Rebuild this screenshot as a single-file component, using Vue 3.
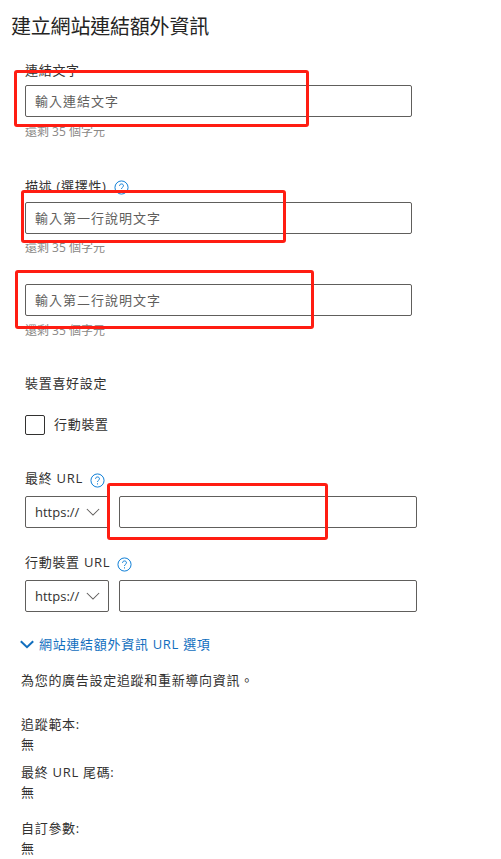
<template>
	<div class="panel">
		<h1 class="panel-title">建立網站連結額外資訊</h1>

		<div class="field first">
			<label class="field-label">連結文字</label>
			<input class="text-input" type="text" placeholder="輸入連結文字" />
			<div class="hint">還剩 35 個字元</div>
		</div>

		<div class="field second">
			<label class="field-label">
				描述 (選擇性)
				<svg class="help" viewBox="0 0 16 16"><circle cx="8" cy="8" r="7" /><path d="M5.9 6.2C6 4.9 6.9 4.2 8 4.2c1.2 0 2.1.8 2.1 1.9 0 1.7-2.1 1.7-2.1 3.4" /><path d="M8 11v1.2" /></svg>
			</label>
			<input class="text-input" type="text" placeholder="輸入第一行說明文字" />
			<div class="hint tight">還剩 35 個字元</div>
		</div>

		<div class="field third">
			<input class="text-input" type="text" placeholder="輸入第二行說明文字" />
			<div class="hint">還剩 35 個字元</div>
		</div>

		<div class="device-title">裝置喜好設定</div>
		<label class="check-row">
			<span class="check-box"></span>
			<span class="check-text">行動裝置</span>
		</label>

		<div v-for="row in urlRows" :key="row.label" class="url-field" :class="row.cls">
			<label class="field-label">
				{{ row.label }}
				<svg class="help" viewBox="0 0 16 16"><circle cx="8" cy="8" r="7" /><path d="M5.9 6.2C6 4.9 6.9 4.2 8 4.2c1.2 0 2.1.8 2.1 1.9 0 1.7-2.1 1.7-2.1 3.4" /><path d="M8 11v1.2" /></svg>
			</label>
			<div class="url-row">
				<div class="protocol">
					<span>https://</span>
					<svg viewBox="0 0 16 10" class="protocol-arrow"><path d="M1 1l7 7 7-7" /></svg>
				</div>
				<input class="text-input url-input" type="text" />
			</div>
		</div>

		<a class="options-link">
			<svg viewBox="0 0 14 9" class="options-arrow"><path d="M.8 1.2L7 7.2l6.2-6" /></svg>
			<span>網站連結額外資訊 URL 選項</span>
		</a>

		<p class="options-desc">為您的廣告設定追蹤和重新導向資訊。</p>

		<dl class="summary">
			<div v-for="item in summary" :key="item.label" class="summary-item">
				<dt>{{ item.label }}</dt>
				<dd>{{ item.value }}</dd>
			</div>
		</dl>

		<!-- red boxes someone drew over the screenshot -->
		<div
			v-for="(box, index) in marks"
			:key="index"
			class="mark"
			:style="{ left: box[0] + 'px', top: box[1] + 'px', width: box[2] + 'px', height: box[3] + 'px' }"
		></div>
	</div>
</template>

<script setup>
const urlRows = [
	{ label: '最終 URL', cls: 'final' },
	{ label: '行動裝置 URL', cls: 'mobile' },
]

const summary = [
	{ label: '追蹤範本:', value: '無' },
	{ label: '最終 URL 尾碼:', value: '無' },
	{ label: '自訂參數:', value: '無' },
]

const marks = [
	[14, 70, 295, 57],
	[21, 190, 265, 53],
	[15, 270, 299, 59],
	[107, 483, 221, 57],
]
</script>

<style scoped>
.panel {
	position: relative;
	width: 501px;
	height: 859px;
	overflow: hidden;
	background: #fff;
	color: #323130;
	font-family: "Open Sans", "Noto Sans CJK TC", sans-serif;
	font-size: 13px;
	line-height: 20px;
	letter-spacing: 0.7px;
}

.panel-title {
	margin: 0;
	padding: 13px 0 0 11px;
	height: 28px;
	line-height: 28px;
	font-size: 20px;
	font-weight: 400;
	letter-spacing: -0.2px;
	color: #252423;
}

.field,
.url-field {
	margin-left: 25px;
}

.field.first {
	margin-top: 19px;
}

.field.second {
	margin-top: 34px;
}

.field.third {
	margin-top: 26px;
}

.field-label {
	display: flex;
	align-items: center;
	gap: 7px;
	height: 20px;
}

.field-label + .text-input {
	margin-top: 5px;
}

.field.second .text-input {
	margin-top: 6px;
}

.text-input {
	display: block;
	box-sizing: border-box;
	width: 387px;
	height: 32px;
	padding: 0 9px;
	border: 1px solid #605e5c;
	border-radius: 2px;
	outline: none;
	background: #fff;
	color: #323130;
	font-family: inherit;
	font-size: 13px;
	letter-spacing: 1px;
}

.text-input::placeholder {
	color: #605e5c;
	opacity: 1;
}

.hint {
	height: 20px;
	margin-top: 5px;
	font-size: 12px;
	color: #8a8886;
	letter-spacing: 0;
}

.hint.tight {
	margin-top: 4px;
}

.device-title {
	height: 20px;
	margin: 32px 0 0 25px;
}

.check-row {
	display: flex;
	align-items: center;
	gap: 9px;
	height: 20px;
	margin: 22px 0 0 25px;
}

.check-box {
	box-sizing: border-box;
	width: 20px;
	height: 20px;
	border: 1px solid #323130;
	border-radius: 2px;
}

.check-text {
	margin-bottom: 2px;
}

.url-field.final {
	margin-top: 33px;
}

.url-field.mobile {
	margin-top: 24px;
}

.url-row {
	display: flex;
	gap: 10px;
	margin-top: 8px;
}

.protocol {
	display: flex;
	align-items: center;
	justify-content: space-between;
	box-sizing: border-box;
	width: 84px;
	height: 32px;
	padding: 0 8px 0 9px;
	border: 1px solid #605e5c;
	border-radius: 2px;
	font-size: 13px;
	letter-spacing: 0;
}

.protocol-arrow {
	width: 14px;
	height: 9px;
	fill: none;
	stroke: #605e5c;
	stroke-width: 1.2;
}

.url-input {
	width: 298px;
	margin: 0;
}

.help {
	width: 15px;
	height: 15px;
	margin-top: 3px;
	fill: none;
	stroke: #0078d4;
	stroke-width: 1;
}

.url-field .help {
	margin-top: 5px;
}

.options-link {
	display: flex;
	align-items: center;
	gap: 5px;
	height: 20px;
	margin: 22px 0 0 20px;
	color: #106ebe;
}

.options-arrow {
	width: 14px;
	height: 9px;
	fill: none;
	stroke: #106ebe;
	stroke-width: 2;
}

.options-desc {
	height: 20px;
	margin: 16px 0 0 21px;
}

.summary {
	margin: 24px 0 0 21px;
}

.summary-item + .summary-item {
	margin-top: 8px;
}

.summary-item:last-child {
	margin-top: 16px;
}

.summary dt,
.summary dd {
	height: 20px;
	margin: 0;
}

.mark {
	position: absolute;
	box-sizing: border-box;
	border: 3px solid #ff1d12;
	border-radius: 3px;
	pointer-events: none;
}
</style>
